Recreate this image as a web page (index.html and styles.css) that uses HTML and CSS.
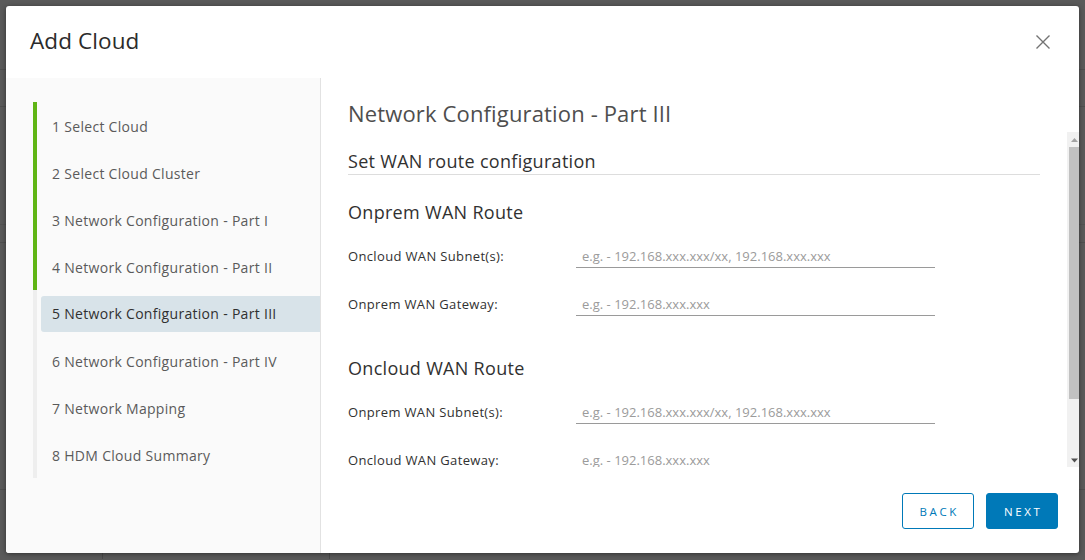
FILE: index.html
```html
<!DOCTYPE html>
<html lang="en">
<head>
<meta charset="utf-8">
<title>Add Cloud</title>
<link rel="stylesheet" href="styles.css">
</head>
<body>
<div class="page">
  <div class="page-row page-row-top"></div>
  <div class="page-row page-row-a"></div>
  <div class="page-row page-row-b"></div>
  <div class="page-row page-row-c"></div>
  <div class="page-row page-row-d"></div>
  <div class="page-row page-row-e">
    <span class="page-cell page-cell-1"></span>
    <span class="page-cell page-cell-2"></span>
  </div>
</div>

<div class="overlay">
  <div class="modal" role="dialog" aria-label="Add Cloud">
    <header class="modal-header">
      <h1 class="modal-title">Add Cloud</h1>
      <button class="close" aria-label="Close">
        <svg width="16" height="16" viewBox="0 0 16 16" aria-hidden="true">
          <path d="M1.5 1.5 L14.5 14.5 M14.5 1.5 L1.5 14.5" stroke="#737373" stroke-width="1.4" fill="none"/>
        </svg>
      </button>
    </header>

    <div class="modal-body">
      <nav class="steps">
        <ol class="step-list">
          <li class="step done"><span class="step-label"><span class="num">1</span> Select Cloud</span></li>
          <li class="step done"><span class="step-label"><span class="num">2</span> Select Cloud Cluster</span></li>
          <li class="step done"><span class="step-label"><span class="num">3</span> Network Configuration - Part I</span></li>
          <li class="step done"><span class="step-label"><span class="num">4</span> Network Configuration - Part II</span></li>
          <li class="step current"><span class="step-label"><span class="num">5</span> Network Configuration - Part III</span></li>
          <li class="step"><span class="step-label"><span class="num">6</span> Network Configuration - Part IV</span></li>
          <li class="step"><span class="step-label"><span class="num">7</span> Network Mapping</span></li>
          <li class="step"><span class="step-label"><span class="num">8</span> HDM Cloud Summary</span></li>
        </ol>
      </nav>

      <section class="content">
        <h2 class="page-title">Network Configuration - Part III</h2>
        <div class="scroll-wrap">
          <div class="scroll">
            <h3 class="subtitle">Set WAN route configuration</h3>

            <h4 class="group-title">Onprem WAN Route</h4>
            <div class="field">
              <label class="field-label">Oncloud WAN Subnet(s):</label>
              <input class="field-input" type="text" placeholder="e.g. - 192.168.xxx.xxx/xx, 192.168.xxx.xxx">
            </div>
            <div class="field">
              <label class="field-label">Onprem WAN Gateway:</label>
              <input class="field-input" type="text" placeholder="e.g. - 192.168.xxx.xxx">
            </div>

            <h4 class="group-title group-title-2">Oncloud WAN Route</h4>
            <div class="field">
              <label class="field-label">Onprem WAN Subnet(s):</label>
              <input class="field-input" type="text" placeholder="e.g. - 192.168.xxx.xxx/xx, 192.168.xxx.xxx">
            </div>
            <div class="field field-last">
              <label class="field-label">Oncloud WAN Gateway:</label>
              <input class="field-input" type="text" placeholder="e.g. - 192.168.xxx.xxx">
            </div>
          </div>
          <div class="scrollbar" aria-hidden="true">
            <div class="sb-btn sb-up">
              <svg width="12" height="15" viewBox="0 0 12 15"><polygon points="4,10 11,10 7.5,6" fill="#a3a3a3"/></svg>
            </div>
            <div class="sb-track"><div class="sb-thumb"></div></div>
            <div class="sb-btn sb-down">
              <svg width="12" height="15" viewBox="0 0 12 15"><polygon points="4,6.5 11,6.5 7.5,10.5" fill="#505050"/></svg>
            </div>
          </div>
        </div>
        <footer class="actions">
          <button class="btn btn-outline">BACK</button>
          <button class="btn btn-primary">NEXT</button>
        </footer>
      </section>
    </div>
  </div>
</div>
</body>
</html>
```

FILE: styles.css
```css
* { box-sizing: border-box; }

html, body {
  margin: 0;
  padding: 0;
  width: 1085px;
  height: 560px;
  overflow: hidden;
  font-family: "Open Sans", "Liberation Sans", sans-serif;
}

body {
  background: #5a5a5a;
  position: relative;
}

/* background page under the backdrop */
.page {
  height: 560px;
  background: #5a5a5a;
}
.page-row {
  border-bottom: 1px solid #4f4f4f;
}
.page-row-top { height: 70px; }
.page-row-a { height: 37px; }
.page-row-b { height: 118px; border-bottom-color: #535353; }
.page-row-c { height: 18px; }
.page-row-d { height: 247px; }
.page-row-e {
  height: 69px;
  display: flex;
  border-bottom: none;
}
.page-cell { display: block; height: 100%; }
.page-cell-1 { width: 103px; border-right: 1px solid #4a4a4a; }
.page-cell-2 { width: 227px; border-right: 1px solid #4a4a4a; }

/* overlay + modal */
.overlay {
  position: absolute;
  inset: 0;
  padding: 6px 6px 7px 6px;
  display: flex;
}

.modal {
  flex: 1;
  background: #fff;
  border-radius: 3px;
  box-shadow: 0 1px 5px rgba(0, 0, 0, 0.45);
  display: flex;
  flex-direction: column;
  overflow: hidden;
}

.modal-header {
  height: 72px;
  flex: none;
  display: flex;
  align-items: center;
  justify-content: space-between;
  padding: 0 28px 3px 24px;
}

.modal-title {
  margin: 0;
  font-size: 22.5px;
  line-height: 30px;
  font-weight: 400;
  color: #2b2b2b;
  letter-spacing: 0.1px;
}

.close {
  border: none;
  background: none;
  padding: 0;
  width: 16px;
  height: 16px;
  display: flex;
  margin-top: 3px;
}

.modal-body {
  flex: 1;
  display: flex;
  min-height: 0;
}

/* stepper */
.steps {
  width: 315px;
  flex: none;
  background: #fafafa;
  border-right: 1px solid #e2e2e2;
  padding: 24px 0 0 27px;
}

.step-list {
  list-style: none;
  margin: 0;
  padding: 0;
}

.step {
  border-left: 4px solid #eeeeee;
  padding: 6px 0 5px 4px;
  height: 47px;
}
.step.done { border-left-color: #60b515; }

.step-label {
  display: block;
  height: 36px;
  line-height: 36px;
  padding: 1px 0 0 11px;
  font-size: 14px;
  letter-spacing: 0.3px;
  color: #5a5a5a;
  border-radius: 3px 0 0 3px;
  white-space: nowrap;
}
.step.current .step-label {
  background: #d8e3e9;
  color: #303030;
  line-height: 34px;
}

/* content */
.content {
  flex: 1;
  display: flex;
  flex-direction: column;
  min-width: 0;
}

.page-title {
  margin: 0;
  padding: 21px 0 0 27px;
  font-size: 22px;
  line-height: 28px;
  height: 49px;
  margin-bottom: 5px;
  font-weight: 400;
  letter-spacing: 0.15px;
  color: #4e4e4e;
  white-space: nowrap;
}

.scroll-wrap {
  height: 335px;
  flex: none;
  display: flex;
}

.scroll {
  flex: 1;
  min-width: 0;
  overflow: hidden;
  padding: 17px 27px 0 27px;
}

.scrollbar {
  width: 12px;
  flex: none;
  display: flex;
  flex-direction: column;
  background: #f1f1f1;
}
.sb-btn {
  height: 15px;
  flex: none;
  display: flex;
}
.sb-track {
  flex: 1;
  padding-left: 2px;
}
.sb-thumb {
  height: 252px;
  background: #c1c1c1;
}

.subtitle {
  margin: 0;
  font-size: 18px;
  line-height: 24px;
  font-weight: 400;
  letter-spacing: 0.3px;
  color: #313131;
  padding-bottom: 1px;
  border-bottom: 1px solid #dddddd;
}

.group-title {
  margin: 25px 0 20px 0;
  font-size: 18px;
  line-height: 24px;
  font-weight: 400;
  letter-spacing: 0.3px;
  color: #313131;
}
.group-title-2 { margin-top: 40px; }

.field {
  display: flex;
  align-items: center;
  height: 24px;
  margin-bottom: 24px;
}
.field-last { margin-bottom: 0; }

.field-label {
  width: 228px;
  flex: none;
  font-size: 13px;
  line-height: 14px;
  letter-spacing: 0.35px;
  color: #313131;
}

.field-input {
  width: 359px;
  height: 24px;
  border: none;
  border-bottom: 1px solid #9a9a9a;
  padding: 0 6px;
  font-family: "Open Sans", "Liberation Sans", sans-serif;
  font-size: 13px;
  color: #313131;
  background: transparent;
  outline: none;
}
.field-input::placeholder {
  color: #9b9b9b;
}

/* footer */
.actions {
  flex: 1;
  display: flex;
  justify-content: flex-end;
  align-items: flex-start;
  gap: 12px;
  padding: 26px 21px 0 0;
}

.btn {
  width: 72px;
  height: 36px;
  border-radius: 3px;
  border: 1px solid #0079b8;
  font-family: "Open Sans", "Liberation Sans", sans-serif;
  font-size: 11.5px;
  font-weight: 500;
  letter-spacing: 2.6px;
  padding: 0 0 0 2.6px;
  cursor: pointer;
}
.btn-outline {
  background: #fff;
  color: #0079b8;
}
.btn-primary {
  background: #0079b8;
  color: #fff;
}
```
